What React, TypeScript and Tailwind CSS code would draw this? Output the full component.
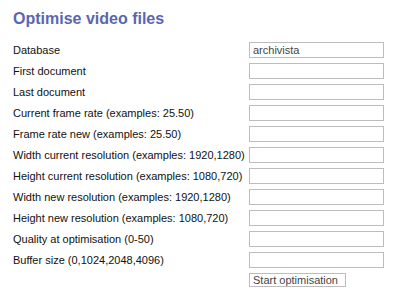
import React from "react";

const rows: [string, string][] = [
  ["Database", "archivista"],
  ["First document", ""],
  ["Last document", ""],
  ["Current frame rate (examples: 25.50)", ""],
  ["Frame rate new (examples: 25.50)", ""],
  ["Width current resolution (examples: 1920,1280)", ""],
  ["Height current resolution (examples: 1080,720)", ""],
  ["Width new resolution (examples: 1920,1280)", ""],
  ["Height new resolution (examples: 1080,720)", ""],
  ["Quality at optimisation (0-50)", ""],
  ["Buffer size (0,1024,2048,4096)", ""],
];

export default function App() {
  return (
    <div
      className="w-[397px] h-[295px] bg-white pl-[13px] pt-[8px]"
      style={{ fontFamily: '"Liberation Sans", Arial, sans-serif' }}
    >
      <h1 className="text-[16px] font-bold text-[#5a66b2] leading-[22px]">
        Optimise video files
      </h1>
      <div className="mt-[12px] grid grid-cols-[236px_135px] gap-y-[5px]">
        {rows.map(([label, value]) => (
          <React.Fragment key={label}>
            <div className="text-[11px] text-[#111] leading-[16px]">{label}</div>
            <input
              readOnly
              value={value}
              className="h-[16px] w-[135px] border border-[#bdbdbd] px-[3px] text-[11px] text-[#444] outline-none"
            />
          </React.Fragment>
        ))}
        <div />
        <button className="h-[14px] w-[97px] border border-[#bdbdbd] bg-white text-left px-[3px] text-[11px] text-[#444] leading-[12px]">
          Start optimisation
        </button>
      </div>
    </div>
  );
}
